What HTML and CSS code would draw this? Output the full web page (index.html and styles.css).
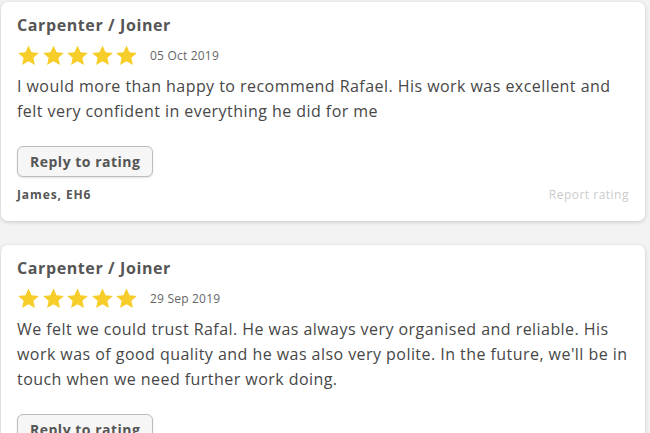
FILE: index.html
```html
<!DOCTYPE html>
<html>
<head>
<meta charset="utf-8">
<link rel="stylesheet" href="styles.css">
</head>
<body>
<div class="list">
  <div class="card">
    <div class="title">Carpenter / Joiner</div>
    <div class="meta">
      <div class="stars">
        <svg class="star" viewBox="0 0 24 24"><path d="M12 1.5l3.2 7 7.6.8-5.7 5.1 1.6 7.5L12 18l-6.7 3.9 1.6-7.5L1.2 9.3l7.6-.8z"/></svg>
        <svg class="star" viewBox="0 0 24 24"><path d="M12 1.5l3.2 7 7.6.8-5.7 5.1 1.6 7.5L12 18l-6.7 3.9 1.6-7.5L1.2 9.3l7.6-.8z"/></svg>
        <svg class="star" viewBox="0 0 24 24"><path d="M12 1.5l3.2 7 7.6.8-5.7 5.1 1.6 7.5L12 18l-6.7 3.9 1.6-7.5L1.2 9.3l7.6-.8z"/></svg>
        <svg class="star" viewBox="0 0 24 24"><path d="M12 1.5l3.2 7 7.6.8-5.7 5.1 1.6 7.5L12 18l-6.7 3.9 1.6-7.5L1.2 9.3l7.6-.8z"/></svg>
        <svg class="star" viewBox="0 0 24 24"><path d="M12 1.5l3.2 7 7.6.8-5.7 5.1 1.6 7.5L12 18l-6.7 3.9 1.6-7.5L1.2 9.3l7.6-.8z"/></svg>
      </div>
      <span class="date">05 Oct 2019</span>
    </div>
    <p class="body">I would more than happy to recommend Rafael. His work was excellent and felt very confident in everything he did for me</p>
    <button class="reply">Reply to rating</button>
    <div class="footer">
      <span class="author">James, EH6</span>
      <span class="report">Report rating</span>
    </div>
  </div>
  <div class="card">
    <div class="title">Carpenter / Joiner</div>
    <div class="meta">
      <div class="stars">
        <svg class="star" viewBox="0 0 24 24"><path d="M12 1.5l3.2 7 7.6.8-5.7 5.1 1.6 7.5L12 18l-6.7 3.9 1.6-7.5L1.2 9.3l7.6-.8z"/></svg>
        <svg class="star" viewBox="0 0 24 24"><path d="M12 1.5l3.2 7 7.6.8-5.7 5.1 1.6 7.5L12 18l-6.7 3.9 1.6-7.5L1.2 9.3l7.6-.8z"/></svg>
        <svg class="star" viewBox="0 0 24 24"><path d="M12 1.5l3.2 7 7.6.8-5.7 5.1 1.6 7.5L12 18l-6.7 3.9 1.6-7.5L1.2 9.3l7.6-.8z"/></svg>
        <svg class="star" viewBox="0 0 24 24"><path d="M12 1.5l3.2 7 7.6.8-5.7 5.1 1.6 7.5L12 18l-6.7 3.9 1.6-7.5L1.2 9.3l7.6-.8z"/></svg>
        <svg class="star" viewBox="0 0 24 24"><path d="M12 1.5l3.2 7 7.6.8-5.7 5.1 1.6 7.5L12 18l-6.7 3.9 1.6-7.5L1.2 9.3l7.6-.8z"/></svg>
      </div>
      <span class="date">29 Sep 2019</span>
    </div>
    <p class="body">We felt we could trust Rafal. He was always very organised and reliable. His work was of good quality and he was also very polite. In the future, we'll be in touch when we need further work doing.</p>
    <button class="reply">Reply to rating</button>
    <div class="footer">
      <span class="author">James, EH6</span>
      <span class="report">Report rating</span>
    </div>
  </div>
</div>
</body>
</html>
```

FILE: styles.css
```css
html, body {
  margin: 0;
  padding: 0;
  background: #f3f3f3;
  font-family: "Open Sans", "DejaVu Sans", sans-serif;
  color: #444;
}
.list {
  display: flex;
  flex-direction: column;
  gap: 24px;
  padding: 2px 5px 0 1px;
}
.card {
  background: #fff;
  border-radius: 7px;
  box-shadow: 0 1px 4px rgba(0,0,0,0.18);
  padding: 13px 16px 18px 16px;
}
.title {
  font-size: 16px;
  font-weight: 700;
  letter-spacing: 0.6px;
  color: #555;
  line-height: 20px;
}
.meta {
  display: flex;
  align-items: center;
  margin-top: 8px;
  height: 24px;
}
.stars {
  display: flex;
  gap: 1.5px;
}
.star {
  width: 23px;
  height: 23px;
  fill: #f7cd2a;
}
.date {
  margin-left: 12px;
  font-size: 12px;
  letter-spacing: 0.2px;
  color: #666;
}
.body {
  margin: 7px 0 0 0;
  font-size: 16px;
  letter-spacing: 0.45px;
  line-height: 25px;
  color: #474747;
}
.reply {
  margin-top: 22px;
  height: 31px;
  padding: 0 12px;
  border: 1px solid #bdbdbd;
  border-radius: 6px;
  background: #f6f6f6;
  font-family: inherit;
  font-weight: 700;
  font-size: 14px;
  letter-spacing: 0.5px;
  color: #555;
  box-shadow: 0 1px 2px rgba(0,0,0,0.12);
}
.footer {
  display: flex;
  justify-content: space-between;
  align-items: center;
  margin-top: 9px;
}
.author {
  font-size: 12px;
  font-weight: 700;
  letter-spacing: 0.9px;
  color: #555;
}
.report {
  font-size: 12px;
  letter-spacing: 0.5px;
  color: #ccc;
}
```
